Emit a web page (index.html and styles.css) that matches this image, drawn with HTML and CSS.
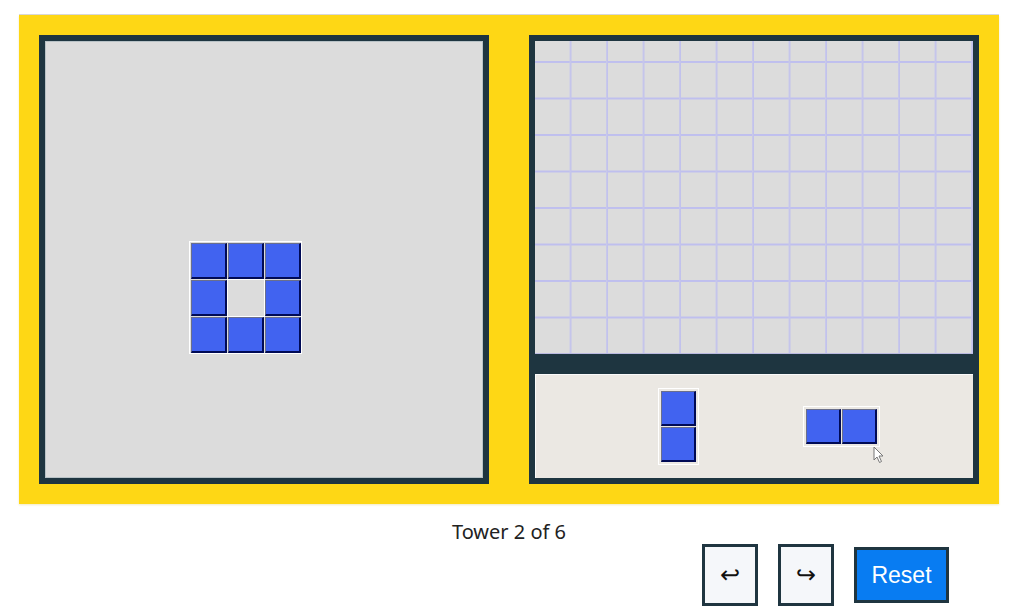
FILE: index.html
```html
<!DOCTYPE html>
<html>
<head>
<meta charset="utf-8">
<link rel="stylesheet" href="styles.css">
</head>
<body>
<div class="stage">
  <div class="panel target">
    <div class="structure ring">
      <div class="block"></div><div class="block"></div><div class="block"></div>
      <div class="block"></div><div class="hole"></div><div class="block"></div>
      <div class="block"></div><div class="block"></div><div class="block"></div>
    </div>
  </div>
  <div class="panel build">
    <div class="grid-area"></div>
    <div class="tray">
      <div class="piece vertical"><div class="block"></div><div class="block"></div></div>
      <div class="piece horizontal"><div class="block"></div><div class="block"></div></div>
      <svg class="cursor" width="12" height="18" viewBox="0 0 12 18"><path d="M1 1 L1 14 L4 11 L6.5 16.5 L8.5 15.5 L6 10 L10 10 Z" fill="#fff" stroke="#777" stroke-width="1"/></svg>
    </div>
  </div>
</div>
<div class="status">Tower 2 of 6</div>
<div class="controls">
  <button class="btn icon-btn">↩</button>
  <button class="btn icon-btn">↪</button>
  <button class="btn reset">Reset</button>
</div>
</body>
</html>
```
FILE: styles.css
```css
html, body {
  margin: 0;
  padding: 0;
  background: #fff;
  font-family: "Noto Sans", "Open Sans", sans-serif;
}
.stage {
  margin: 15px 0 0 19px;
  width: 940px;
  height: 449px;
  padding: 20px;
  background: #fed715;
  display: flex;
  gap: 40px;
  box-shadow: 0 -1px 0 #d8d8d8, 0 1px 2px rgba(200, 170, 0, 0.25);
}
.panel {
  width: 450px;
  height: 449px;
  box-sizing: border-box;
  border: 6px solid #1e3540;
  background: #dcdcdc;
  position: relative;
}
.target {
  box-shadow: inset 0 0 0 1px #b8c2c6;
}
.structure {
  position: absolute;
  border: 1px solid #fff;
}
.ring {
  left: 144px;
  top: 200px;
  padding: 1px 0 0 1px;
  display: grid;
  grid-template-columns: repeat(3, 36px);
  grid-template-rows: repeat(3, 36px);
  gap: 1px;
}
.block {
  box-sizing: border-box;
  background: #4163f0;
  border-top: 1px solid #6a6f8c;
  border-left: 1px solid #6a6f8c;
  border-right: 2px solid #000a55;
  border-bottom: 2px solid #000a55;
}
.hole {
  background: #dcdcdc;
  outline: 1px solid #fff;
}
.build {
  display: flex;
  flex-direction: column;
  background: #1e3540;
}
.grid-area {
  height: 313px;
  background-color: #dcdcdc;
  background-image:
    linear-gradient(to right, transparent 35px, #c8c8ea 35px, #bfbfee 36.5px),
    linear-gradient(to bottom, #bfbfee 1.5px, transparent 1.5px);
  background-size: 36.5px 36.5px;
  background-position: left bottom;
  border-bottom: 1px solid #b9b9e0;
  box-sizing: border-box;
}
.tray {
  margin-top: 20px;
  flex: 1;
  background: #ebe8e3;
  border-top: 1px solid #fafafa;
  border-left: 1px solid #fafafa;
  display: flex;
  align-items: center;
  position: relative;
}
.piece {
  border: 1px solid #fff;
  padding: 2px;
  display: grid;
  gap: 1px;
}
.piece.vertical {
  margin-left: 122px;
  grid-template-columns: 35px;
  grid-template-rows: 35px 35px;
}
.piece.horizontal {
  margin-left: 104px;
  grid-template-columns: 35px 35px;
  grid-template-rows: 35px;
}
.cursor {
  position: absolute;
  left: 337px;
  top: 71px;
}
.status {
  margin-top: 16px;
  text-align: center;
  font-size: 20px;
  line-height: 24px;
  color: #222;
  padding-left: 4px;
}
.controls {
  display: flex;
  justify-content: flex-end;
  align-items: center;
  gap: 20px;
  padding-right: 65px;
}
.btn {
  box-sizing: border-box;
  border: 3px solid #1f3540;
  margin: 0;
  padding: 0;
  cursor: pointer;
}
.icon-btn {
  width: 56px;
  height: 62px;
  background: #f5f7fa;
  font-size: 24px;
  color: #111;
  font-family: "DejaVu Sans", sans-serif;
}
.reset {
  width: 95px;
  height: 56px;
  background: #087cf2;
  color: #fff;
  font-family: "Liberation Sans", Arial, sans-serif;
  font-size: 23px;
}
```
